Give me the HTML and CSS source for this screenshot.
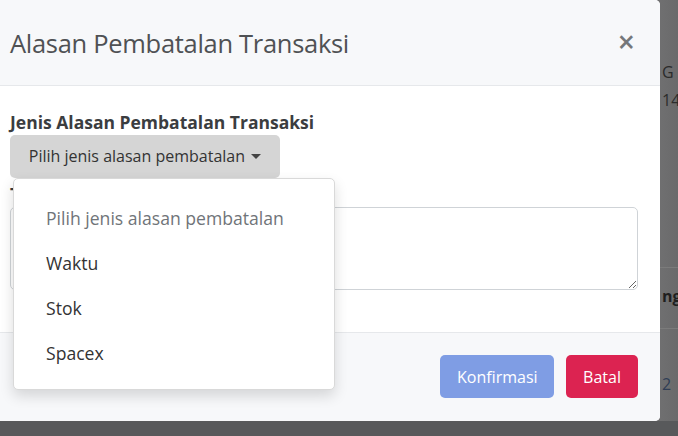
FILE: index.html
```html
<!DOCTYPE html>
<html lang="id">
<head>
<meta charset="utf-8">
<title>Alasan Pembatalan Transaksi</title>
<link rel="stylesheet" href="styles.css">
</head>
<body>
<div class="page">
  <div class="page-col">
    <div class="cell cell-head">G</div>
    <div class="cell cell-num">14</div>
    <div class="cell-line line-a"></div>
    <div class="cell cell-bold">ng</div>
    <div class="cell-line line-b"></div>
    <div class="cell cell-link">2</div>
  </div>
  <div class="page-foot"></div>
</div>

<div class="modal">
  <div class="modal-header">
    <h5 class="modal-title">Alasan Pembatalan Transaksi</h5>
    <span class="close">&times;</span>
  </div>
  <div class="modal-body">
    <label class="label">Jenis Alasan Pembatalan Transaksi</label>
    <div class="dropdown">
      <button class="btn-select">Pilih jenis alasan pembatalan <span class="caret"></span></button>
      <ul class="menu">
        <li class="menu-item muted">Pilih jenis alasan pembatalan</li>
        <li class="menu-item">Waktu</li>
        <li class="menu-item">Stok</li>
        <li class="menu-item">Spacex</li>
      </ul>
    </div>
    <label class="label label-2">Teks Alasan Pembatalan Transaksi</label>
    <textarea class="textarea"></textarea>
  </div>
  <div class="modal-footer">
    <button class="btn btn-primary">Konfirmasi</button>
    <button class="btn btn-danger">Batal</button>
  </div>
</div>
</body>
</html>
```
FILE: styles.css
```css
* { box-sizing: border-box; }
html, body { margin: 0; padding: 0; }
body {
  width: 678px;
  height: 436px;
  overflow: hidden;
  background: #6f7071;
  font-family: "Open Sans", "Noto Sans", sans-serif;
  position: relative;
}
.page {
  display: flex;
  flex-direction: column;
  height: 436px;
  background: linear-gradient(90deg, #6e6e6f 0%, #727273 96%, #6a6a6b 100%);
}
.page-col {
  flex: 1;
  padding-left: 660px;
  color: #2c2c2c;
  font-size: 16px;
}
.cell { height: 20px; line-height: 20px; padding-left: 2px; white-space: nowrap; overflow: hidden; }
.cell-head { margin-top: 62px; color: #2a2a2a; }
.cell-num { margin-top: 8px; }
.cell-line { height: 1px; background: #7b7b7b; }
.line-a { margin-top: 157px; }
.cell-bold { margin-top: 18px; font-weight: 700; color: #1f1f1f; }
.line-b { margin-top: 22px; }
.cell-link { margin-top: 45px; color: #2f3d55; }
.page-foot {
  height: 15px;
  background: #58595b;
}

.modal {
  position: absolute;
  left: -6px;
  top: 0;
  width: 666px;
  height: 421px;
  background: #fff;
  border-radius: 5px;
  overflow: hidden;
  display: flex;
  flex-direction: column;
}
.modal-header {
  height: 86px;
  background: #f7f8fa;
  border-bottom: 1px solid #e6e8eb;
  display: flex;
  align-items: center;
  justify-content: space-between;
  padding: 0 25px 0 16px;
}
.modal-title {
  margin: 0;
  font-size: 25.5px;
  font-weight: 400;
  color: #4f5154;
  letter-spacing: -0.3px;
}
.close {
  font-size: 30px;
  font-weight: 600;
  color: #75777a;
  line-height: 1;
  margin-top: -2px;
}
.modal-body {
  height: 246px;
  padding: 24px 22px 0 16px;
  display: flex;
  flex-direction: column;
  align-items: flex-start;
}
.label {
  font-size: 17.5px;
  font-weight: 700;
  color: #3b3d40;
  line-height: 24px;
  height: 25px;
  white-space: nowrap;
}
.dropdown { position: relative; }
.btn-select {
  font-family: inherit;
  font-size: 16px;
  color: #333;
  background: #d5d5d5;
  border: 0;
  border-radius: 5px;
  height: 43px;
  width: 270px;
  padding: 0 0 1px 0;
  text-align: center;
}
.caret {
  display: inline-block;
  width: 0;
  height: 0;
  border-left: 5px solid transparent;
  border-right: 5px solid transparent;
  border-top: 5px solid #444;
  vertical-align: 3px;
  margin-left: 2px;
}
.menu {
  position: absolute;
  left: 3px;
  top: 43px;
  width: 322px;
  margin: 0;
  padding: 17px 0 13px;
  list-style: none;
  background: #fff;
  border: 1px solid #d9d9d9;
  border-radius: 5px;
  box-shadow: 0 6px 14px rgba(0,0,0,0.14);
  z-index: 2;
}
.menu-item {
  height: 45px;
  line-height: 45px;
  padding-left: 32px;
  font-size: 17.6px;
  color: #333;
}
.menu-item.muted { color: #707479; }
.label-2 { margin-top: 4px; }
.textarea {
  width: 628px;
  height: 83px;
  border: 1px solid #cfd3d7;
  border-radius: 5px;
  resize: vertical;
  margin: 0;
}
.modal-footer {
  flex: 1;
  background: #f7f8fa;
  border-top: 1px solid #e6e8eb;
  display: flex;
  align-items: center;
  justify-content: flex-end;
  gap: 12px;
  padding: 0 22px 1px 0;
}
.btn {
  font-family: inherit;
  font-size: 16px;
  color: #fff;
  border: 0;
  border-radius: 5px;
  height: 43px;
  padding: 0 17px;
}
.btn-primary { background: #7f9de4; width: 114px; }
.btn-danger { background: #dc2351; width: 72px; }
```
